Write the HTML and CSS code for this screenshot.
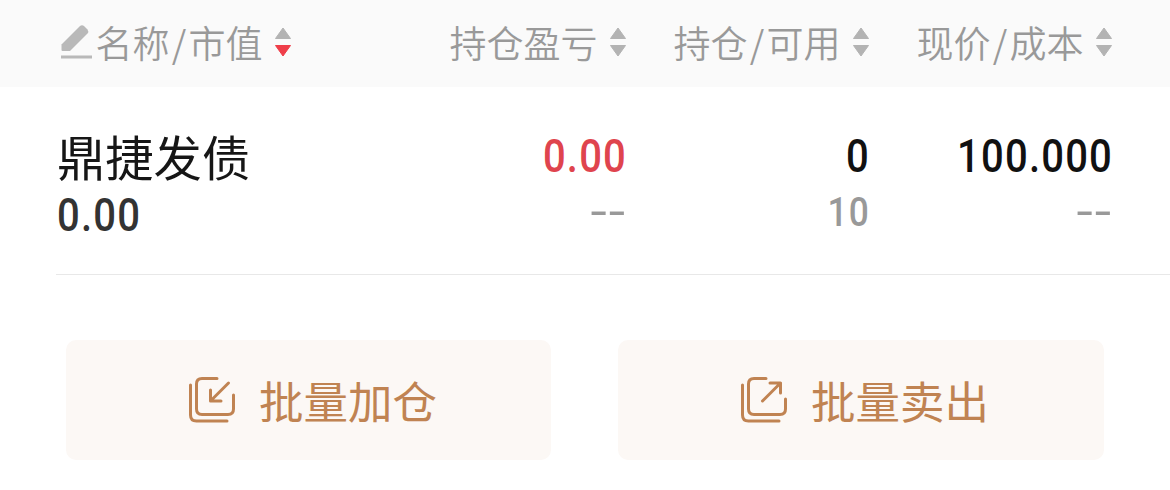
FILE: index.html
```html
<!DOCTYPE html>
<html lang="zh-CN">
<head>
<meta charset="utf-8">
<title>持仓</title>
<link rel="stylesheet" href="styles.css">
</head>
<body>
<header class="row head">
  <div class="cell first">
    <svg class="pencil" width="32" height="36" viewBox="0 0 32 36"><path d="M.5 20.500 19 2Q21 .3 23 2L26.500 5.500Q28 7.500 26.500 9.500L9 27H1.500Q.5 27 .5 26Z"/><path d="M0 31.500H31V34.500H0Z"/></svg>
    <span class="label">名称<i>/</i>市值</span>
    <svg class="sort" width="18" height="30" viewBox="0 0 18 30"><path d="M9 1 16.500 11.500H1.500Z"/><path class="active" d="M1.500 18.500H16.500L9 29Z"/></svg>
  </div>
  <div class="cell">
    <span class="label">持仓盈亏</span>
    <svg class="sort" width="18" height="30" viewBox="0 0 18 30"><path d="M9 1 16.500 11.500H1.500Z"/><path d="M1.500 18.500H16.500L9 29Z"/></svg>
  </div>
  <div class="cell">
    <span class="label">持仓<i>/</i>可用</span>
    <svg class="sort" width="18" height="30" viewBox="0 0 18 30"><path d="M9 1 16.500 11.500H1.500Z"/><path d="M1.500 18.500H16.500L9 29Z"/></svg>
  </div>
  <div class="cell">
    <span class="label">现价<i>/</i>成本</span>
    <svg class="sort" width="18" height="30" viewBox="0 0 18 30"><path d="M9 1 16.500 11.500H1.500Z"/><path d="M1.500 18.500H16.500L9 29Z"/></svg>
  </div>
</header>
<section class="row holding">
  <div class="stock"><div class="name">鼎捷发债</div><div class="num value">0.00</div></div>
  <div class="pair"><div class="num red">0.00</div><div class="dash">--</div></div>
  <div class="pair"><div class="num">0</div><div class="num sub">10</div></div>
  <div class="pair"><div class="num">100.000</div><div class="dash">--</div></div>
</section>
<nav class="actions">
  <button class="action">
    <svg width="48" height="48" viewBox="0 0 48 48"><path d="M28 2.500H13Q7.500 2.500 7.500 8V33Q7.500 38.500 13 38.500H39Q44.500 38.500 44.500 33V19"/><path d="M1.500 9V39Q1.500 45 7.500 45H38"/><path d="M39.500 7 21.500 25M21.500 14V25H32"/></svg>
    <span>批量加仓</span>
  </button>
  <button class="action">
    <svg width="48" height="48" viewBox="0 0 48 48"><path d="M25 2.500H13Q7.500 2.500 7.500 8V33Q7.500 38.500 13 38.500H39Q44.500 38.500 44.500 33V23"/><path d="M1.500 9V39Q1.500 45 7.500 45H38"/><path d="M21.500 25 39.500 7M29 7H39.500V17"/></svg>
    <span>批量卖出</span>
  </button>
</nav>
</body>
</html>
```
FILE: styles.css
```css
* { box-sizing: border-box; }
body {
  margin: 0;
  width: 1170px;
  height: 490px;
  overflow: hidden;
  background: #fff;
  font-family: "Noto Sans CJK SC", sans-serif;
}
.row {
  display: grid;
  grid-template-columns: 270px 300px 243px 243px;
}
.head {
  height: 87px;
  padding-left: 57px;
  background: #fafafa;
  color: #999;
}
.cell {
  display: flex;
  justify-content: flex-end;
  align-items: center;
  height: 83px;
}
.first { justify-content: flex-start; padding-left: 3.500px; }
.label { font-size: 37px; line-height: 50px; font-weight: 350; white-space: nowrap; }
.label i { font-style: normal; margin: 0 2.300px; }
.pencil { margin-right: 3px; fill: #b9b9b9; }
.sort { margin-left: 11.500px; fill: #b3b3b3; }
.sort path { stroke: #b3b3b3; stroke-width: 1; stroke-linejoin: round; }
.sort .active { fill: #ef3e49; stroke: #ef3e49; }
.holding {
  height: 188px;
  margin-left: 56px;
  padding: 42px 0 0 1px;
  border-bottom: 1px solid #e8e8e8;
}
.name { height: 52px; line-height: 52px; font-size: 48.300px; color: #161616; white-space: nowrap; }
.num {
  height: 50px;
  line-height: 50px;
  font-family: Roboto, sans-serif;
  font-weight: 500;
  font-size: 46.500px;
  letter-spacing: 1.400px;
  color: #111;
  transform: scaleX(.86);
  transform-origin: right;
}
.value { color: #333; transform-origin: left; margin-top: 9px; }
.pair { padding-top: 2px; text-align: right; }
.red { color: #df444e; }
.sub, .dash { color: #999; }
.sub { height: 62px; line-height: 62px; font-size: 41px; }
.dash {
  height: 60px;
  line-height: 60px;
  font-family: Roboto, sans-serif;
  font-size: 46px;
  letter-spacing: 1.500px;
  transform: scaleX(1.28);
  transform-origin: right;
}
.actions {
  display: grid;
  grid-template-columns: 485px 486px;
  gap: 67px;
  padding: 65px 0 0 66px;
}
.action {
  display: flex;
  align-items: center;
  justify-content: flex-start;
  gap: 22px;
  height: 120px;
  padding: 0 0 0 123px;
  border: 0;
  border-radius: 10px;
  background: #fcf8f5;
  color: #c08352;
  font: 400 44.500px/60px "Noto Sans CJK SC", sans-serif;
  white-space: nowrap;
}
.action svg { fill: none; stroke: #c08352; stroke-width: 3; stroke-linecap: round; stroke-linejoin: round; }
```
